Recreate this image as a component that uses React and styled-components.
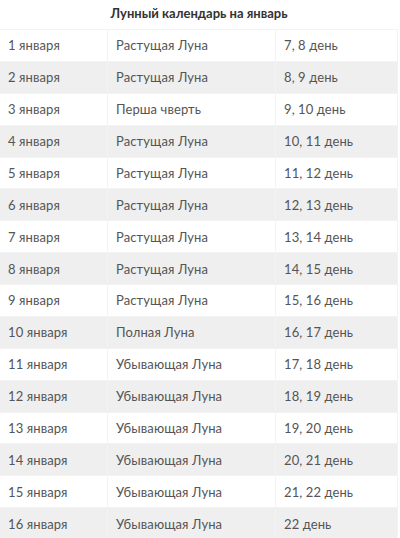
import React from "react";
import styled, { createGlobalStyle } from "styled-components";

const Global = createGlobalStyle`
  html, body { margin: 0; padding: 0; background: #fff; }
  body { font-family: Lato, "Open Sans", "Liberation Sans", sans-serif; }
`;

const Wrap = styled.div`
  width: 398px;
  display: flex;
  flex-direction: column;
`;

const Title = styled.div`
  height: 29px;
  display: flex;
  align-items: center;
  justify-content: center;
  font-weight: 700;
  font-size: 13px;
  color: #333;
  padding-bottom: 3px;
  box-sizing: border-box;
`;

const Table = styled.div`
  display: flex;
  flex-direction: column;
  border-right: 1px solid #f2f2f2;
`;

const Row = styled.div`
  display: grid;
  grid-template-columns: 108px 168px 1fr;
  height: 31.875px;
  background: ${(p) => (p.$alt ? "#efefef" : "#ffffff")};
  border-top: 1px solid #f3f3f3;
  box-sizing: border-box;
`;

const Cell = styled.div`
  display: flex;
  align-items: center;
  padding-left: 8px;
  font-size: 13px;
  letter-spacing: 0.1px;
  color: #555;
  border-right: 1px solid #f3f3f3;
  white-space: nowrap;
  &:last-child { border-right: none; }
`;

const data = [
  ["1 января", "Растущая Луна", "7, 8 день"],
  ["2 января", "Растущая Луна", "8, 9 день"],
  ["3 января", "Перша чверть", "9, 10 день"],
  ["4 января", "Растущая Луна", "10, 11 день"],
  ["5 января", "Растущая Луна", "11, 12 день"],
  ["6 января", "Растущая Луна", "12, 13 день"],
  ["7 января", "Растущая Луна", "13, 14 день"],
  ["8 января", "Растущая Луна", "14, 15 день"],
  ["9 января", "Растущая Луна", "15, 16 день"],
  ["10 января", "Полная Луна", "16, 17 день"],
  ["11 января", "Убывающая Луна", "17, 18 день"],
  ["12 января", "Убывающая Луна", "18, 19 день"],
  ["13 января", "Убывающая Луна", "19, 20 день"],
  ["14 января", "Убывающая Луна", "20, 21 день"],
  ["15 января", "Убывающая Луна", "21, 22 день"],
  ["16 января", "Убывающая Луна", "22 день"],
];

export default function App() {
  return (
    <>
      <Global />
      <Wrap>
        <Title>Лунный календарь на январь</Title>
        <Table>
          {data.map((r, i) => (
            <Row key={i} $alt={i % 2 === 1}>
              <Cell>{r[0]}</Cell>
              <Cell>{r[1]}</Cell>
              <Cell>{r[2]}</Cell>
            </Row>
          ))}
        </Table>
      </Wrap>
    </>
  );
}
